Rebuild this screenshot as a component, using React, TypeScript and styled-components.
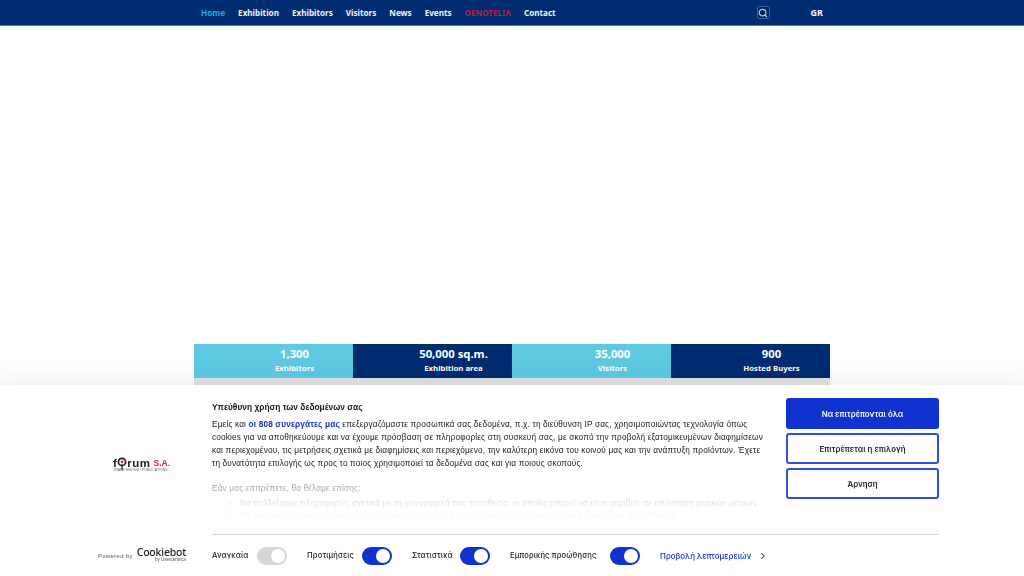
import { Search, ChevronRight } from 'lucide-react';
import styled, { createGlobalStyle } from 'styled-components';

const GlobalStyle = createGlobalStyle`
  html, body {
    margin: 0;
    padding: 0;
    background: #fff;
    overflow: hidden;
  }
  * {
    box-sizing: border-box;
  }
`;

const Page = styled.div`
  width: 1024px;
  height: 576px;
  overflow: hidden;
  font-family: "Liberation Sans", Arial, sans-serif;
`;

const TopBar = styled.nav`
  height: 26px;
  padding: 0 201px;
  background: #002c71;
  border-bottom: 1px solid #5d7aa6;
  display: flex;
  align-items: center;
  font-family: "Noto Sans", sans-serif;
`;

const Menu = styled.div`
  display: flex;
  gap: 13px;
  flex: 1;
`;

const MenuItem = styled.a<{ $color?: string }>`
  font-size: 8.15px;
  font-weight: 700;
  color: ${(p) => p.$color || '#f1f3f7'};
`;

const SearchBox = styled.span`
  width: 13px;
  height: 13px;
  background: #00214f;
  border: 1px solid #1f6da3;
  border-radius: 2px;
  color: #8fd6f0;
  display: flex;
  align-items: center;
  justify-content: center;
`;

const Lang = styled.a`
  margin-left: 41px;
  font-size: 9px;
  font-weight: 700;
  color: #f1f3f7;
`;

const Hero = styled.div`
  height: 318px;
`;

const Stats = styled.section`
  width: 636px;
  margin: 0 auto;
  display: grid;
  grid-template-columns: repeat(4, 1fr);
  border-bottom: 7px solid #e4e4e4;
  font-family: "Noto Sans", sans-serif;
  color: #fff;
`;

const Stat = styled.div<{ $dark?: boolean }>`
  height: 34px;
  padding: 0 0 2px 42px;
  background: ${(p) => (p.$dark ? '#002c71' : '#5ec9e3')};
  display: flex;
  flex-direction: column;
  align-items: center;
  justify-content: center;
`;

const StatValue = styled.strong`
  font-size: 11.3px;
  line-height: 14px;
`;

const StatLabel = styled.span`
  margin-top: 1px;
  font-size: 7.8px;
  font-weight: 700;
  line-height: 12px;
`;

const Dialog = styled.aside`
  position: fixed;
  left: 0;
  right: 0;
  bottom: 0;
  height: 191px;
  padding: 0 85px 0 98px;
  background: #fff;
  box-shadow: 0 0 28px rgba(0, 0, 0, 0.1);
`;

const DialogTop = styled.div`
  height: 149px;
  display: grid;
  grid-template-columns: 114px 1fr 153px;
`;

const LogoCol = styled.div`
  padding: 73px 0 0 15px;
`;

const ForumLogo = styled.div`
  width: 60px;
`;

const ForumWord = styled.div`
  display: flex;
  align-items: center;
  height: 10px;
  font-size: 11.5px;
  font-weight: 700;
  color: #222;
  letter-spacing: 0.5px;
  white-space: nowrap;
`;

const ForumRed = styled.span`
  margin-left: 3px;
  font-size: 8.5px;
  letter-spacing: 0;
  color: #d2232a;
`;

const ForumTag = styled.div`
  font-size: 3.5px;
  color: #666;
  white-space: nowrap;
`;

const Body = styled.div`
  position: relative;
  height: 149px;
  padding: 16px 25px 0 0;
  overflow: hidden;
  font-size: 8.25px;
  line-height: 12.9px;
  letter-spacing: 0.16px;
  color: #222;
`;

const Title = styled.h2`
  margin: 0 0 6px;
  font-size: 8.3px;
  line-height: 12px;
  font-weight: 700;
  letter-spacing: 0.05px;
  color: #141414;
`;

const Paragraph = styled.p`
  margin: 0 0 12px;
  white-space: nowrap;
`;

const PartnerLink = styled.a`
  color: #1032cf;
  font-weight: 700;
`;

const Bullets = styled.ul`
  margin: 2px 0 0;
  padding-left: 28px;
  white-space: nowrap;
`;

const Fade = styled.div`
  position: absolute;
  left: 0;
  right: 0;
  bottom: 0;
  height: 64px;
  background: linear-gradient(
    to bottom,
    rgba(255, 255, 255, 0) 0%,
    rgba(255, 255, 255, 0.6) 28%,
    rgba(255, 255, 255, 0.87) 52%,
    rgba(255, 255, 255, 0.96) 70%,
    #fff 88%
  );
`;

const Actions = styled.div`
  padding-top: 13px;
  display: flex;
  flex-direction: column;
  gap: 4px;
`;

const ActionButton = styled.button<{ $primary?: boolean }>`
  height: 31px;
  padding: 0;
  border: 2px solid ${(p) => (p.$primary ? '#1032cf' : '#2f50dc')};
  border-radius: 3px;
  background: ${(p) => (p.$primary ? '#1032cf' : '#fff')};
  color: ${(p) => (p.$primary ? '#fff' : '#222')};
  font-family: Inter, sans-serif;
  font-size: 7.9px;
  font-weight: 600;
`;

const DialogBottom = styled.div`
  display: grid;
  grid-template-columns: 114px 1fr;
`;

const PoweredBy = styled.div`
  display: flex;
  align-items: center;
  gap: 4px;
  padding-bottom: 2px;
`;

const PoweredText = styled.span`
  font-size: 6px;
  letter-spacing: 0.3px;
  color: #555;
  padding-top: 3px;
`;

const BrandBlock = styled.div`
  display: flex;
  flex-direction: column;
  align-items: flex-end;
  color: #222;
`;

const BrandName = styled.span`
  font-family: "Noto Sans", sans-serif;
  font-size: 10.5px;
  line-height: 10px;
  letter-spacing: -0.2px;
  font-weight: 500;
`;

const BrandSub = styled.span`
  font-size: 4.5px;
  line-height: 5px;
  color: #555;
`;

const Controls = styled.div`
  height: 42px;
  border-top: 1px solid #d6d6d6;
  display: flex;
  align-items: center;
`;

const ToggleLabel = styled.span`
  font-family: Inter, sans-serif;
  font-size: 7.6px;
  font-weight: 500;
  letter-spacing: 0.15px;
  color: #222;
  white-space: nowrap;
`;

const Toggle = styled.span<{ $on: boolean }>`
  width: 30px;
  height: 18px;
  margin: 0 20px 0 auto;
  padding: 2px;
  border-radius: 9px;
  background: ${(p) => (p.$on ? '#1032cf' : '#d6d6d6')};
  display: flex;
  justify-content: flex-end;

  &::after {
    content: '';
    width: 14px;
    height: 14px;
    border-radius: 50%;
    background: #fff;
  }
`;

const ControlItem = styled.div<{ $width: number }>`
  width: ${(p) => p.$width}px;
  display: flex;
  align-items: center;
`;

const DetailsLink = styled.a`
  display: flex;
  align-items: center;
  gap: 7px;
  font-family: Inter, sans-serif;
  font-size: 7.9px;
  font-weight: 500;
  color: #1032cf;
  white-space: nowrap;

  svg {
    color: #222;
  }
`;

const controls = [
  { label: 'Αναγκαία', on: false, width: 95 },
  { label: 'Προτιμήσεις', on: true, width: 105 },
  { label: 'Στατιστικά', on: true, width: 98 },
  { label: 'Εμπορικής προώθησης', on: true, width: 150 },
];

const stats = [
  { value: '1,300', label: 'Exhibitors' },
  { value: '50,000 sq.m.', label: 'Exhibition area', dark: true },
  { value: '35,000', label: 'Visitors' },
  { value: '900', label: 'Hosted Buyers', dark: true },
];

const App = () => {
  return (
    <Page>
      <GlobalStyle />
      <TopBar>
        <Menu>
          <MenuItem $color="#1ea7e0">Home</MenuItem>
          <MenuItem>Exhibition</MenuItem>
          <MenuItem>Exhibitors</MenuItem>
          <MenuItem>Visitors</MenuItem>
          <MenuItem>News</MenuItem>
          <MenuItem>Events</MenuItem>
          <MenuItem $color="#b3203f">OENOTELIA</MenuItem>
          <MenuItem>Contact</MenuItem>
        </Menu>
        <SearchBox>
          <Search size={10} strokeWidth={3} />
        </SearchBox>
        <Lang>GR</Lang>
      </TopBar>
      <Hero />
      <Stats>
        {stats.map((s) => (
          <Stat key={s.label} $dark={s.dark}>
            <StatValue>{s.value}</StatValue>
            <StatLabel>{s.label}</StatLabel>
          </Stat>
        ))}
      </Stats>
      <Dialog>
        <DialogTop>
          <LogoCol>
            <ForumLogo>
              <ForumWord>
                f
                <svg width="10" height="13" viewBox="0 0 9 12">
                  <circle cx="4.5" cy="4.5" r="3.3" fill="none" stroke="#222" strokeWidth="1.6" />
                  <circle cx="4.5" cy="4.5" r="1.2" fill="#d2232a" />
                  <path d="M4.5 8v4" stroke="#222" strokeWidth="1.2" />
                </svg>
                rum<ForumRed>S.A.</ForumRed>
              </ForumWord>
              <ForumTag>TRADE SHOWS • PUBLICATIONS</ForumTag>
            </ForumLogo>
          </LogoCol>
          <Body>
            <Title>Υπεύθυνη χρήση των δεδομένων σας</Title>
            <Paragraph>
              Εμείς και <PartnerLink>οι 808 συνεργάτες μας</PartnerLink> επεξεργαζόμαστε προσωπικά σας δεδομένα, π.χ. τη διεύθυνση IP σας, χρησιμοποιώντας τεχνολογία όπως
              <br />
              cookies για να αποθηκεύουμε και να έχουμε πρόσβαση σε πληροφορίες στη συσκευή σας, με σκοπό την προβολή εξατομικευμένων διαφημίσεων
              <br />
              και περιεχομένου, τις μετρήσεις σχετικά με διαφημίσεις και περιεχόμενο, την καλύτερη εικόνα του κοινού μας και την ανάπτυξη προϊόντων. Έχετε
              <br />
              τη δυνατότητα επιλογής ως προς το ποιος χρησιμοποιεί τα δεδομένα σας και για ποιους σκοπούς.
            </Paragraph>
            <div>Εάν μας επιτρέπετε, θα θέλαμε επίσης:</div>
            <Bullets>
              <li>Να συλλέξουμε πληροφορίες σχετικά με τη γεωγραφική σας τοποθεσία, οι οποίες μπορεί να είναι ακριβείς σε απόσταση μερικών μέτρων</li>
              <li>Να αναγνωρίσουμε τη συσκευή σας σαρώνοντας ενεργά για συγκεκριμένα χαρακτηριστικά (δακτυλικό αποτύπωμα)</li>
            </Bullets>
            <Fade />
          </Body>
          <Actions>
            <ActionButton $primary>Να επιτρέπονται όλα</ActionButton>
            <ActionButton>Επιτρέπεται η επιλογή</ActionButton>
            <ActionButton>Άρνηση</ActionButton>
          </Actions>
        </DialogTop>
        <DialogBottom>
          <PoweredBy>
            <PoweredText>Powered by</PoweredText>
            <BrandBlock>
              <BrandName>Cookiebot</BrandName>
              <BrandSub>by Usercentrics</BrandSub>
            </BrandBlock>
          </PoweredBy>
          <Controls>
            {controls.map((c) => (
              <ControlItem key={c.label} $width={c.width}>
                <ToggleLabel>{c.label}</ToggleLabel>
                <Toggle $on={c.on} />
              </ControlItem>
            ))}
            <DetailsLink>
              Προβολή λεπτομερειών
              <ChevronRight size={10} strokeWidth={2.5} />
            </DetailsLink>
          </Controls>
        </DialogBottom>
      </Dialog>
    </Page>
  );
};

export default App;
